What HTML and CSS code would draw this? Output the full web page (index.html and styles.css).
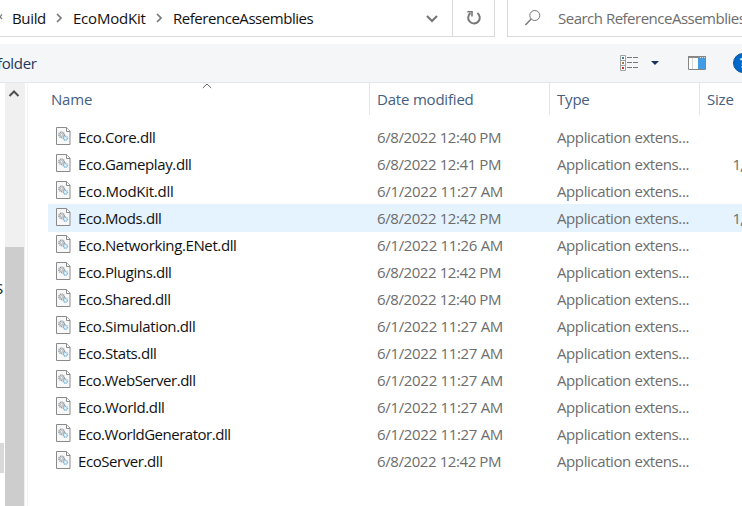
FILE: index.html
```html
<!DOCTYPE html>
<html lang="en">
<head>
<meta charset="utf-8">
<title>ReferenceAssemblies</title>
<link rel="stylesheet" href="styles.css">
</head>
<body>
<div class="window">
  <header class="topbar">
    <nav class="address">
      <svg class="overflow" width="4" height="37" viewBox="0 0 4 37"><path d="M2 14.5L0 16.8L2 19" fill="none" stroke="#777" stroke-width="1.2"/></svg>
      <span class="crumb build">Build</span>
      <svg class="sep" width="8" height="12" viewBox="0 0 8 12"><path d="M2 2L6 6L2 10" /></svg>
      <span class="crumb kit">EcoModKit</span>
      <svg class="sep" width="8" height="12" viewBox="0 0 8 12"><path d="M2 2L6 6L2 10" /></svg>
      <span class="crumb current">ReferenceAssemblies</span>
      <svg class="dropdown" width="14" height="10" viewBox="0 0 14 10"><path d="M2 2L7 7L12 2" /></svg>
    </nav>
    <div class="refresh">
      <svg width="16" height="16" viewBox="0 0 16 16"><path d="M4.4 3.1A5.8 5.8 0 1 0 11.4 3" fill="none" stroke="#777" stroke-width="2"/><path d="M1.3 1.8H6V6.5" fill="none" stroke="#777" stroke-width="1.6"/></svg>
    </div>
    <div class="search">
      <svg width="18" height="18" viewBox="0 0 18 18" fill="none" stroke="#777"><circle cx="10.8" cy="6.5" r="5"/><path d="M7.2 10L1.4 16" stroke-width="1.4"/></svg>
      <span>Search ReferenceAssemblies</span>
    </div>
  </header>
  <div class="toolbar">
    <span class="folder">folder</span>
    <svg class="view" width="18" height="16" viewBox="0 0 18 16"><path fill="#fff" stroke="#a0a0a0" d="M.5.5h5v15h-5zM.5 5.5h5M.5 10.500h5"/><path stroke="#787878" d="M7 2.500h5M13 2.500h5M7 7.500h5M13 7.500h5M7 12.500h5M13 12.500h5"/><path fill="#36899c" d="M2 2h2v2H2z"/><path fill="#a17643" d="M2 7h2v2H2z"/><path fill="#c62f22" d="M2 12h2v2H2z"/></svg>
    <svg class="caret" width="8" height="4" viewBox="0 0 8 4"><path d="M0 0h8L4 4z" fill="#17325c"/></svg>
    <svg class="preview" width="18" height="14" viewBox="0 0 18 14"><path fill="#fff" d="M0 0h18v14H0z"/><path fill="#8b8b8b" d="M0 0h18v2H0z"/><path fill="#d9d9d9" d="M12 1h1v1h-1zM14 1h1v1h-1zM16 1h1v1h-1zM4 2h1v11H4z"/><path fill="#429ce3" d="M10 2h7v11h-7z"/><path d="M.5.5h17v13H.5z" fill="none" stroke="#858585"/></svg>
    <span class="help">?</span>
  </div>
  <main class="content">
    <aside class="tree"><span class="letter">S</span><div class="selected"></div></aside>
    <div class="scrollbar">
      <svg width="12" height="9" viewBox="0 0 12 9"><path d="M1.500 7L6 2.500L10.500 7" fill="none" stroke="#505050" stroke-width="2"/></svg>
      <div class="thumb"></div>
    </div>
    <section class="list">
      <div class="head">
        <span class="name">Name</span><span class="date">Date modified</span><span class="type">Type</span><span class="size">Size</span>
        <svg class="sort" width="10" height="6" viewBox="0 0 10 6"><path d="M.8 5L5 1L9.200 5" fill="none" stroke="#666"/></svg>
      </div>
      <div class="rows" id="rows"></div>
    </section>
  </main>
</div>
<template id="file-icon">
  <svg width="15" height="18" viewBox="0 0 15 18"><path d="M.5.5H10.500L14 4V17.500H.5z" fill="#f8f8f8" stroke="#8a8a8a"/><path d="M10.500.5V4.500H14" fill="#fff" stroke="#8a8a8a"/><circle cx="5.600" cy="7.800" r="2.600" fill="none" stroke="#92999e" stroke-width="1.700" stroke-dasharray="1.100 .6"/><circle cx="5.600" cy="7.800" r="1.200" fill="none" stroke="#92999e" stroke-width=".6"/><circle cx="9.400" cy="11.200" r="2" fill="#e5f3fb" stroke="#82b5d6" stroke-width="1.500" stroke-dasharray="1.100 .5"/></svg>
</template>
<script src="files.js"></script>
</body>
</html>
```
FILE: styles.css
```css
* { box-sizing: border-box; }
body { margin: 0; background: #fff; font: 15px/20px "Open Sans", "Noto Sans", sans-serif; letter-spacing: -.35px; color: #111; }
svg { display: block; flex: none; }
.window { width: 742px; height: 506px; overflow: hidden; display: flex; flex-direction: column; white-space: nowrap; }
.topbar { display: flex; height: 37px; }
.address { width: 453px; display: flex; align-items: center; border: solid #d9d9d9; border-width: 0 1px 1px 0; }
.overflow { margin-right: 8px; }
.build { width: 43px; }
.kit { width: 82px; letter-spacing: -.22px; }
.current { letter-spacing: -.46px; }
.sep { margin-right: 10px; }
.sep path, .dropdown path { fill: none; stroke: #777; stroke-width: 1.7; }
.dropdown path { stroke-width: 2.2; }
.dropdown { margin: 1px 13px 0 auto; }
.refresh { width: 42px; display: flex; align-items: center; justify-content: center; border: solid #d9d9d9; border-width: 0 1px 1px 0; }
.search { margin-left: 12px; flex: 1; min-width: 0; display: flex; align-items: center; gap: 16px; padding-left: 16px; border: solid #d9d9d9; border-width: 0 0 1px 1px; color: #6d6d6d; letter-spacing: -.5px; }
.toolbar { margin-top: 7px; height: 39px; background: #f5f6f8; border-bottom: 1px solid #e5e6e8; display: flex; align-items: center; color: #1e395b; }
.folder { flex: none; width: 623px; margin-left: -3px; }
.view { flex: none; }
.caret { margin-left: 13px; }
.preview { margin-left: 29px; }
.help { flex: none; width: 20px; height: 20px; margin-left: 27px; border-radius: 50%; border: 1px solid #0755a5; background: #0068c8; color: #fff; font: bold 14px/18px "Open Sans", sans-serif; text-align: center; }
.content { flex: 1; display: flex; min-height: 0; }
.tree { width: 5px; overflow: hidden; display: flex; flex-direction: column; padding-top: 195px; }
.letter { margin-left: -5px; color: #111; height: 20px; }
.selected { width: 4px; height: 30px; margin-top: 145px; background: #d9d9d9; }
.scrollbar { width: 20px; background: #f0f0f0; display: flex; flex-direction: column; }
.scrollbar svg { margin: 6px 0 0 3px; }
.thumb { width: 19px; flex: 1; margin-top: 149px; background: #cdcdcd; }
.list { flex: 1; min-width: 0; margin-left: 2px; border-left: 1px solid #f3f3f3; overflow: hidden; }
.head, .row { display: grid; grid-template-columns: 322px 180px 150px 100px; }
.head { position: relative; height: 32px; margin-left: 20px; color: #44607f; line-height: 32px; letter-spacing: -.2px; }
.head span { padding-left: 7px; border-right: 1px solid #e5e5e5; }
.head .name { padding-left: 3px; }
.sort { position: absolute; left: 154px; top: 0; }
.rows { padding-top: 8px; margin-left: 20px; }
.row { height: 27px; color: #6d6d6d; line-height: 29px; }
.row.hover { height: 28px; margin-bottom: -1px; background: #e5f3ff; }
.cell { padding-left: 7px; }
.cell.file { display: flex; gap: 7px; color: #111; padding-left: 8px; }
.cell.file svg { margin-top: 4px; }
.cell.kb { padding-left: 32.5px; letter-spacing: -1px; }
```
FILE: files.js
```js
const files = [
  ["Eco.Core.dll", "6/8/2022 12:40 PM", "", 77],
  ["Eco.Gameplay.dll", "6/8/2022 12:41 PM", "1,", 113],
  ["Eco.ModKit.dll", "6/1/2022 11:27 AM", "", 95],
  ["Eco.Mods.dll", "6/8/2022 12:42 PM", "1,", 83],
  ["Eco.Networking.ENet.dll", "6/1/2022 11:26 AM", "", 158],
  ["Eco.Plugins.dll", "6/8/2022 12:42 PM", "", 93],
  ["Eco.Shared.dll", "6/8/2022 12:40 PM", "", 92],
  ["Eco.Simulation.dll", "6/1/2022 11:27 AM", "", 117],
  ["Eco.Stats.dll", "6/1/2022 11:27 AM", "", 78],
  ["Eco.WebServer.dll", "6/1/2022 11:27 AM", "", 117],
  ["Eco.World.dll", "6/1/2022 11:27 AM", "", 86],
  ["Eco.WorldGenerator.dll", "6/1/2022 11:27 AM", "", 152],
  ["EcoServer.dll", "6/8/2022 12:42 PM", "", 84]
];

// Track the text so that it fills the given width.
function fit(el, width) {
  el.style.letterSpacing = "0px";
  const natural = el.getBoundingClientRect().width;
  el.style.letterSpacing = (width + .5 - natural) / el.textContent.length + "px";
}

const rows = document.getElementById("rows");
const icon = document.getElementById("file-icon");
files.forEach(([name, date, size, width], i) => {
  const row = document.createElement("div");
  row.className = i === 3 ? "row hover" : "row";
  const cells = ["file", "date", "type", "kb"].map(kind => {
    const cell = document.createElement("div");
    cell.className = "cell " + kind;
    row.append(cell);
    return cell;
  });
  cells[0].append(icon.content.cloneNode(true));
  const texts = [name, date, "Application extens...", size].map((text, c) => {
    const span = document.createElement("span");
    span.textContent = text;
    cells[c].append(span);
    return span;
  });
  rows.append(row);
  fit(texts[0], width);
  fit(texts[1], date.endsWith("AM") ? 125.5 : 123.5);
  fit(texts[2], 131.5);
});
```
